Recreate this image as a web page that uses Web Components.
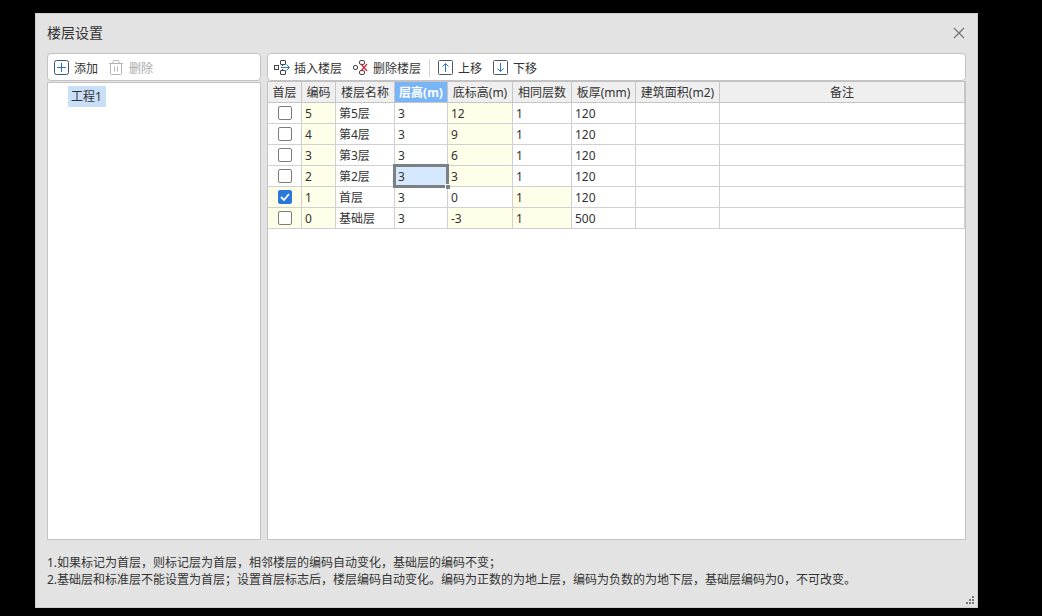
<!DOCTYPE html>
<html lang="zh-CN">
<head>
<meta charset="utf-8">
<title>楼层设置</title>
<style>
html,body{height:100%}
body{margin:0;background:#000;color:#333;box-sizing:border-box;padding:13px 64px 8px 35px;font:12px/16px "Noto Sans","Noto Sans CJK SC",sans-serif}
</style>
</head>
<body>
<floor-dialog></floor-dialog>
<script>
const define = (name, html, setup) => {
  const t = document.createElement('template');
  t.innerHTML = html;
  customElements.define(name, class extends HTMLElement {
    constructor() {
      super();
      this.attachShadow({mode: 'open'}).append(t.content.cloneNode(true));
    }
    connectedCallback() { if (setup) setup(this, this.shadowRoot); }
  });
};

define('tool-button', `
<style>
:host{display:block}
button{display:flex;align-items:center;gap:4px;padding:0;border:0;background:none;font:inherit;color:inherit;white-space:nowrap}
button:disabled{color:#aaa}
span{padding-top:2px}
</style>
<button type="button"><slot name="icon"></slot><span><slot></slot></span></button>`,
(el, root) => { root.querySelector('button').disabled = el.hasAttribute('disabled'); });

define('tool-bar', `
<style>
:host{display:flex;align-items:center;gap:11px;height:24px;padding:2px 6px 0;background:#fff;border:1px solid #c3c3c3;border-radius:4px}
</style><slot></slot>`);

define('project-tree', `
<style>
:host{display:block;flex:1;margin-top:1px;background:#fff;border:1px solid #c3c3c3;padding:3px 20px}
ul{list-style:none;margin:0;padding:0}
li{width:max-content;padding:0 4px 0 3px;line-height:21px;background:#c9dff8}
</style>
<ul><li>工程1</li></ul>`);

define('floor-table', `
<style>
:host{display:block;flex:1;background:#fff;border:1px solid #c3c3c3}
table{width:100%;table-layout:fixed;border-collapse:separate;border-spacing:0}
th,td{box-sizing:border-box;height:21px;padding:2px 3px 0;border-right:1px solid #d0d0d0;border-bottom:1px solid #d0d0d0;line-height:18px;text-align:left;white-space:nowrap}
th{padding:2px 0 0;text-align:center;font-weight:400;background:#efefef;border-color:#c6c6c6}
th.on{background:#78b4f8;color:#fff;font-weight:700}
td.y{background:#ffffe9}
td.c{padding:0;text-align:center}
td.sel{position:relative;background:#d6e8fd}
td.sel::before{content:"";position:absolute;inset:-2px;border:3px solid #7a8084}
td.sel::after{content:"";position:absolute;right:-3px;bottom:-3px;width:4px;height:4px;background:#7a8084;border:solid #fff;border-width:1px 0 0 1px}
input{appearance:none;display:block;box-sizing:border-box;width:14px;height:14px;margin:0 auto;border:1px solid #7c7c7c;border-radius:2px;background:#fff}
input:checked{border-color:#2a78dc;background:#2a78dc url("data:image/svg+xml,%3Csvg xmlns='http://www.w3.org/2000/svg' viewBox='0 0 12 12'%3E%3Cpath d='M2 6l3 3 5-6' fill='none' stroke='white' stroke-width='1.8'/%3E%3C/svg%3E")}
</style>
<table>
<colgroup><col style="width:34px"><col style="width:34px"><col style="width:59px"><col style="width:53px"><col style="width:65px"><col style="width:59px"><col style="width:64px"><col style="width:84px"><col></colgroup>
<thead><tr><th>首层</th><th>编码</th><th>楼层名称</th><th class="on">层高(m)</th><th>底标高(m)</th><th>相同层数</th><th>板厚(mm)</th><th>建筑面积(m2)</th><th>备注</th></tr></thead>
<tbody></tbody>
</table>`,
(el, root) => {
  const rows = [
    ['5','第5层','3','12','1','120'],
    ['4','第4层','3','9','1','120'],
    ['3','第3层','3','6','1','120'],
    ['2','第2层','3','3','1','120'],
    ['1','首层','3','0','1','120'],
    ['0','基础层','3','-3','1','500']
  ];
  root.querySelector('tbody').innerHTML = rows.map(([code, name, h, base, same, slab], i) => `
    <tr><td class="c${i > 3 ? ' y' : ''}"><input type="checkbox" aria-label="${name}"${i === 4 ? ' checked' : ''}></td>
    <td class="y">${code}</td><td>${name}</td><td${i === 3 ? ' class="sel"' : ''}>${h}</td>
    <td${i === 4 ? '' : ' class="y"'}>${base}</td><td${i > 3 ? ' class="y"' : ''}>${same}</td><td>${slab}</td><td></td><td></td></tr>`).join('');
});

define('floor-dialog', `
<style>
:host{position:relative;box-sizing:border-box;display:flex;flex-direction:column;min-height:100%;background:#e3e3e3;border:1px solid #cfcfcf;padding:0 11px}
header{box-sizing:border-box;display:flex;align-items:center;justify-content:space-between;height:39px;padding-bottom:2px}
h1{margin:0;font-size:14px;line-height:20px;font-weight:400}
.close{display:block;padding:0;border:0;background:none;line-height:0}
main{flex:1;display:grid;grid-template-columns:214px 1fr;gap:6px}
section{display:flex;flex-direction:column;min-width:0}
footer{padding:14px 0 19px;line-height:17px}
p{margin:0}
i{width:1px;height:18px;margin:0 -3px;background:#d4d4d4}
svg{display:block;fill:none}
.grip{position:absolute;right:3px;bottom:3px}
</style>
<header><h1>楼层设置</h1>
<button class="close" type="button" aria-label="关闭"><svg width="14" height="14" stroke="#777" stroke-width="1.3"><path d="M2 2l10 10M12 2L2 12"/></svg></button></header>
<main>
<section>
<tool-bar>
<tool-button><svg slot="icon" width="16" height="16"><rect x=".5" y=".5" width="14" height="14" rx="2" stroke="#41546e"/><path d="M7.5 3v9M3 7.5h9" stroke="#2a70c8"/></svg>添加</tool-button>
<tool-button disabled><svg slot="icon" width="16" height="16" stroke="#b4b4b4"><path d="M0 3.500h14M4 3V1.500a1 1 0 0 1 1-1h4a1 1 0 0 1 1 1V3M1.500 4v9.500a1 1 0 0 0 1 1h9a1 1 0 0 0 1-1V4M5.500 6.500v5M8.500 6.500v5"/></svg>删除</tool-button>
</tool-bar>
<project-tree></project-tree>
</section>
<section>
<tool-bar>
<tool-button><svg slot="icon" width="16" height="16" stroke="#444"><rect x=".5" y="5.500" width="4" height="4"/><rect x="6.500" y=".5" width="5" height="4" rx=".5"/><rect x="6.500" y="10.500" width="5" height="4" rx=".5"/><path d="M8.500 4.500v1.500M8.500 9v1.500"/><path d="M7 7.500h8.500M12.500 4.500l3 3-3 3" stroke="#2a78d8"/></svg>插入楼层</tool-button>
<tool-button><svg slot="icon" width="16" height="16" stroke="#444"><rect x=".5" y="5.500" width="4" height="4" rx="1.5"/><rect x="6.500" y=".5" width="5" height="4" rx="1.5"/><rect x="6.500" y="10.500" width="5" height="4" rx="1.5"/><path d="M8 4l6 7M14 4l-6 7" stroke="#d8293c" stroke-width="1.3"/></svg>删除楼层</tool-button>
<i></i>
<tool-button><svg slot="icon" width="16" height="16"><rect x=".5" y=".5" width="14" height="14" rx="1" stroke="#505a66"/><path d="M7.500 12V3.500M4.500 6.500l3-3 3 3" stroke="#2a78d8"/></svg>上移</tool-button>
<tool-button><svg slot="icon" width="16" height="16"><rect x=".5" y=".5" width="14" height="14" rx="1" stroke="#505a66"/><path d="M7.500 3v8.500M4.500 8.500l3 3 3-3" stroke="#2a78d8"/></svg>下移</tool-button>
</tool-bar>
<floor-table></floor-table>
</section>
</main>
<footer><p>1.如果标记为首层，则标记层为首层，相邻楼层的编码自动变化，基础层的编码不变；</p><p>2.基础层和标准层不能设置为首层；设置首层标志后，楼层编码自动变化。编码为正数的为地上层，编码为负数的为地下层，基础层编码为0，不可改变。</p></footer>
<svg class="grip" width="8" height="8"><path fill="#777" d="M6 0h2v2H6zM3 3h2v2H3zM6 3h2v2H6zM0 6h2v2H0zM3 6h2v2H3zM6 6h2v2H6z"/></svg>`);
</script>
</body>
</html>
